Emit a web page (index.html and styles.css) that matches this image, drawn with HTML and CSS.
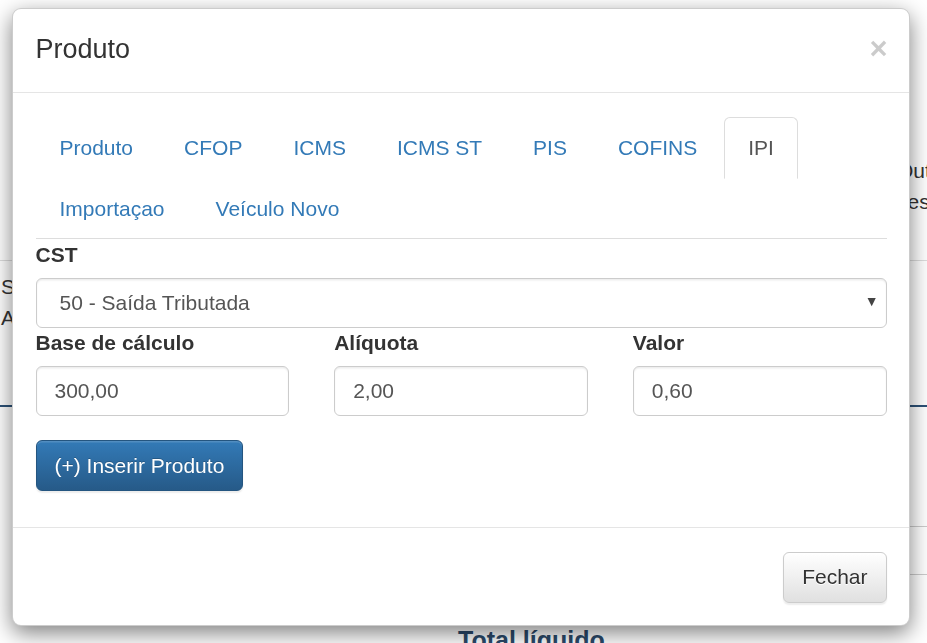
FILE: index.html
```html
<!DOCTYPE html>
<html>

<head>
  <meta charset="UTF-8">
  <title>Produto</title>
  <link rel="stylesheet" href="styles.css">
</head>

<body>

  <!-- page behind the modal -->
  <div class="page">
    <div class="page-top">
      <div class="side-note">
        <span>Outras</span>
        <span>Tesouro</span>
      </div>
    </div>
    <div class="page-rule"></div>
    <div class="page-cols">
      <span>SKU</span>
      <span>ANP</span>
    </div>
    <div class="page-rule blue"></div>
    <div class="page-box"></div>
    <h2 class="page-total">Total líquido</h2>
  </div>

  <div class="modal">
    <div class="modal-header">
      <h4 class="modal-title">Produto</h4>
      <span class="close">&times;</span>
    </div>

    <div class="modal-body">
      <ul class="nav-tabs">
        <li><a href="#">Produto</a></li>
        <li><a href="#">CFOP</a></li>
        <li><a href="#">ICMS</a></li>
        <li><a href="#">ICMS ST</a></li>
        <li><a href="#">PIS</a></li>
        <li><a href="#">COFINS</a></li>
        <li class="active"><a href="#">IPI</a></li>
        <li><a href="#">Importaçao</a></li>
        <li><a href="#">Veículo Novo</a></li>
      </ul>

      <div class="tab-pane">
        <label>CST</label>
        <div class="select-wrap">
          <select class="form-control">
            <option>50 - Saída Tributada</option>
          </select>
        </div>

        <div class="row">
          <div class="col">
            <label>Base de cálculo</label>
            <input class="form-control" type="text" value="300,00">
          </div>
          <div class="col">
            <label>Alíquota</label>
            <input class="form-control" type="text" value="2,00">
          </div>
          <div class="col">
            <label>Valor</label>
            <input class="form-control" type="text" value="0,60">
          </div>
        </div>

        <div class="actions">
          <button class="btn btn-primary">(+) Inserir Produto</button>
        </div>
      </div>
    </div>

    <div class="modal-footer">
      <button class="btn btn-default">Fechar</button>
    </div>
  </div>

</body>

</html>
```

FILE: styles.css
```css
html,
body {
  margin: 0;
  height: 100%;
  overflow: hidden;
  background: #fff;
  font-family: "Liberation Sans", Arial, Helvetica, sans-serif;
  color: #333;
}

/* page behind */
.page {
  font-size: 21px;
  line-height: 31px;
}

.page-top {
  display: flex;
  justify-content: flex-end;
  padding-top: 155px;
  height: 80px;
}

.side-note {
  width: 30px;
  display: flex;
  flex-direction: column;
  white-space: nowrap;
}

.page-rule {
  border-top: 1.5px solid #ddd;
  margin-top: 25px;
}

.page-rule.blue {
  border-top: 2px solid #2d5277;
  margin-top: 72px;
}

.page-cols {
  display: flex;
  flex-direction: column;
  padding-top: 10px;
  padding-left: 1px;
}

.page-box {
  margin: 119px 0 0 auto;
  width: 120px;
  height: 47px;
  border-top: 1.5px solid #ccc;
  border-bottom: 1.5px solid #ccc;
}

.page-total {
  margin: 50px 0 0 0;
  padding-left: 458px;
  font-size: 25px;
  font-weight: bold;
  color: #2b4a6b;
}

/* modal */
.modal {
  position: fixed;
  top: 8px;
  left: 12px;
  width: 896px;
  background: #fff;
  border: 1px solid rgba(0, 0, 0, 0.2);
  border-radius: 9px;
  box-shadow: 0 7px 22px rgba(0, 0, 0, 0.5);
}

.modal-header {
  display: flex;
  justify-content: space-between;
  align-items: flex-start;
  padding: 20.5px 22.5px 23.5px;
  border-bottom: 1.5px solid #e5e5e5;
}

.modal-title {
  margin: 0;
  font-size: 27px;
  font-weight: normal;
  line-height: 38.5px;
  color: #333;
}

.close {
  font-size: 31px;
  font-weight: bold;
  line-height: 1;
  color: #000;
  opacity: 0.2;
  margin-top: 3px;
  margin-right: -1px;
}

.modal-body {
  padding: 24.5px 22.5px 22.5px;
}

.nav-tabs {
  display: flex;
  flex-wrap: wrap;
  list-style: none;
  margin: 0;
  padding: 0;
  border-bottom: 1.5px solid #ddd;
}

.nav-tabs li {
  margin-bottom: -1.5px;
}

.nav-tabs a {
  display: block;
  margin-right: 3px;
  padding: 15px 23px;
  font-size: 21px;
  line-height: 30px;
  color: #337ab7;
  text-decoration: none;
  border: 1.5px solid transparent;
  border-radius: 6px 6px 0 0;
}

.nav-tabs .active a {
  color: #555;
  background: #fff;
  border-color: #ddd #ddd transparent;
}

.tab-pane {
  padding-top: 1px;
}

.tab-pane label {
  display: block;
  font-size: 21px;
  font-weight: bold;
  line-height: 30px;
  margin-bottom: 8px;
}

.form-control {
  display: block;
  width: 100%;
  box-sizing: border-box;
  height: 50px;
  padding: 9px 18px;
  font-family: inherit;
  font-size: 21px;
  line-height: 30px;
  color: #555;
  background: #fff;
  border: 1.5px solid #ccc;
  border-radius: 6px;
  box-shadow: inset 0 1.5px 1.5px rgba(0, 0, 0, 0.075);
}

.select-wrap {
  position: relative;
}

.select-wrap select {
  appearance: none;
  -webkit-appearance: none;
  padding-left: 23px;
}

.select-wrap::after {
  content: "\25BC";
  position: absolute;
  right: 8px;
  top: 15px;
  font-size: 14px;
  color: #444;
  pointer-events: none;
}

.row {
  display: grid;
  grid-template-columns: repeat(3, 1fr);
  gap: 45px;
}

.actions {
  margin: 24px 0 13.5px;
}

.btn {
  display: inline-block;
  box-sizing: border-box;
  height: 51px;
  padding: 9px 18px;
  font-family: inherit;
  font-size: 21px;
  line-height: 30px;
  border-radius: 6px;
  border: 1.5px solid transparent;
  box-shadow: inset 0 1.5px 0 rgba(255, 255, 255, 0.15), 0 1.5px 1.5px rgba(0, 0, 0, 0.075);
}

.btn-primary {
  color: #fff;
  background: linear-gradient(to bottom, #337ab7 0, #265a88 100%);
  border-color: #245580;
  text-shadow: 0 -1px 0 rgba(0, 0, 0, 0.2);
}

.btn-default {
  color: #333;
  background: linear-gradient(to bottom, #fff 0, #e0e0e0 100%);
  border-color: #ccc;
  text-shadow: 0 1px 0 #fff;
}

.modal-footer {
  padding: 23.5px 22.5px 22.5px;
  text-align: right;
  border-top: 1.5px solid #e5e5e5;
}
```
